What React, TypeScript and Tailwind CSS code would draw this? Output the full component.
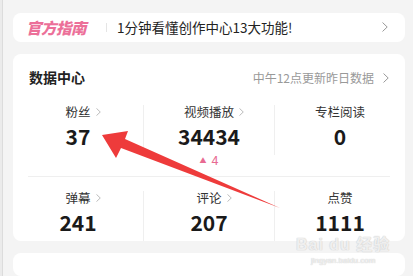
import type { ReactNode } from "react";

const font = { fontFamily: '"Noto Sans CJK SC", "Noto Sans", sans-serif' };

function Chevron({ className }: { className?: string }) {
  return (
    <svg viewBox="0 0 6 10" className={className} fill="none" stroke="currentColor" strokeWidth="1" strokeLinecap="round" strokeLinejoin="round">
      <path d="M0.8 0.8 L5.2 5 L0.8 9.2" />
    </svg>
  );
}

function Stat({ label, value, link, extra }: { label: string; value: string; link?: boolean; extra?: ReactNode }) {
  return (
    <div className="flex flex-col items-center">
      <div className="relative h-[18px] text-[12.5px] leading-[18px] text-[#333]">
        {label}
        {link && <Chevron className="absolute left-full top-[5px] ml-[5px] h-[8px] w-[5px] text-[#aaa]" />}
      </div>
      <div className="mt-[2px] text-[21px] font-bold leading-[26px] text-[#1a1a1a]">{value}</div>
      {extra}
    </div>
  );
}

function Divider() {
  return <div className="mt-[2px] h-[50px] w-px self-start bg-[#efefef]" />;
}

export default function App() {
  return (
    <div className="relative flex h-[276px] w-[413px] overflow-hidden bg-[#f4f4f4]" style={font}>
      <div className="w-[3px] border-r border-[#dcdcdc] bg-[#ebebeb]" />
      <div className="flex flex-1 flex-col gap-[12px] pl-[10px] pr-[8px] pt-[13px]">
        <div className="flex h-[37px] items-center rounded-lg bg-white pl-[13px] pr-[17px]">
          <span className="text-[15.5px] font-black italic tracking-[-0.5px] text-[#ec7099]">官方指南</span>
          <span className="ml-[20px] h-[9px] w-px bg-[#e5e5e5]" />
          <span className="ml-[10px] flex-1 text-[13.5px] text-[#222]">1分钟看懂创作中心13大功能!</span>
          <Chevron className="h-[10px] w-[6px] text-[#999]" />
        </div>

        <div className="flex h-[194px] flex-col rounded-lg bg-white pt-[14px]">
          <div className="flex h-[20px] items-center px-[16px]">
            <span className="flex-1 text-[14px] font-bold text-[#222]">数据中心</span>
            <span className="text-[12px] text-[#999]">中午12点更新昨日数据</span>
            <Chevron className="ml-[9px] h-[10px] w-[6px] text-[#999]" />
          </div>

          <div className="mt-[15px] grid grid-cols-[1fr_1px_1fr_1px_1fr]">
            <Stat label="粉丝" value="37" link />
            <Divider />
            <Stat
              label="视频播放"
              value="34434"
              link
              extra={
                <div className="mt-[3px] flex h-[16px] items-center gap-[5px] text-[12.5px] leading-[16px] text-[#e86a92]">
                  <span className="text-[7px]">▲</span>
                  <span>4</span>
                </div>
              }
            />
            <Divider />
            <Stat label="专栏阅读" value="0" />
          </div>

          <div className="mx-[15px] mt-[8px] h-px bg-[#efefef]" />

          <div className="mt-[12px] grid grid-cols-[1fr_1px_1fr_1px_1fr]">
            <Stat label="弹幕" value="241" link />
            <Divider />
            <Stat label="评论" value="207" link />
            <Divider />
            <Stat label="点赞" value="1111" />
          </div>
        </div>

        <div className="h-[30px] rounded-lg bg-white" />
      </div>

      <svg className="pointer-events-none absolute left-0 top-0" width="413" height="276" viewBox="0 0 413 276">
        <polygon points="102,135 128,131 125,139 280,208 121,148 116,158" fill="#ee3b3b" />
      </svg>

      <div className="pointer-events-none absolute left-[296px] top-[237px] flex flex-col items-center leading-none text-white/70" style={{ textShadow: "0 0 1px #ccc, 0 0 1px #ccc" }}>
        <span className="text-[16px] font-bold tracking-[1px]" style={{ fontFamily: '"Liberation Sans", "Noto Sans CJK SC", sans-serif' }}>Bai du 经验</span>
        <span className="mt-[4px] text-[8px]" style={{ fontFamily: '"Liberation Sans", sans-serif' }}>jingyan.baidu.com</span>
      </div>
    </div>
  );
}
